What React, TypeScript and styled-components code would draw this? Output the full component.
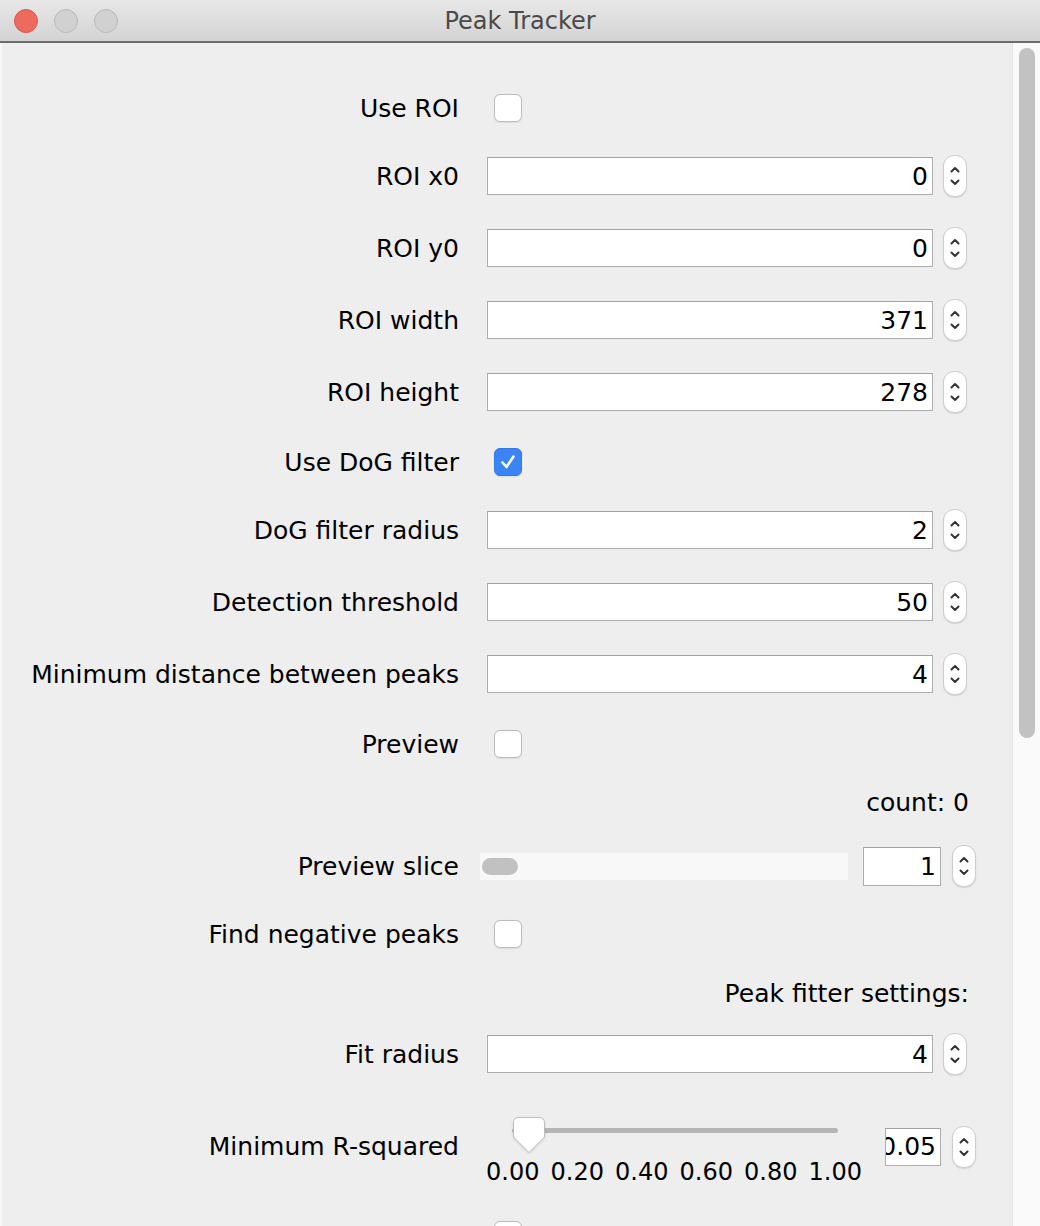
import styled, { createGlobalStyle } from "styled-components";

const GlobalStyle = createGlobalStyle`
  html, body {
    margin: 0;
    padding: 0;
    background: #eeeeee;
  }
  body {
    font-family: "DejaVu Sans", "Liberation Sans", sans-serif;
    color: #000;
  }
`;

const Window = styled.div`
  width: 1040px;
  height: 1226px;
  overflow: hidden;
  display: flex;
  flex-direction: column;
  background: #eeeeee;
`;

const TitleBar = styled.div`
  height: 41px;
  flex: none;
  display: grid;
  grid-template-columns: 1fr auto 1fr;
  align-items: center;
  background: linear-gradient(#e8e8e8, #d3d3d3);
  border-bottom: 2px solid #6c6c6c;
`;

const Lights = styled.div`
  display: flex;
  gap: 16px;
  padding-left: 14px;
`;

const Light = styled.span<{ $red?: boolean }>`
  width: 24px;
  height: 24px;
  box-sizing: border-box;
  border-radius: 50%;
  background: ${(p) => (p.$red ? "#ee6a5f" : "#d1d1d1")};
  border: 1px solid ${(p) => (p.$red ? "#d8584d" : "#b9b9b9")};
`;

const Title = styled.div`
  font-size: 24px;
  color: #4a4a4a;
  padding-top: 1px;
`;

const Body = styled.div`
  flex: 1;
  display: flex;
  min-height: 0;
`;

const Panel = styled.div`
  flex: 1;
  display: flex;
  flex-direction: column;
  padding-top: 43px;
  border-left: 2px solid #f6f6f6;
`;

const ScrollTrack = styled.div`
  width: 28px;
  flex: none;
  background: #fafafa;
  border-left: 1px solid #e4e4e4;
  padding: 5px 0 0 6px;
  box-sizing: border-box;
`;

const ScrollThumb = styled.div`
  width: 16px;
  height: 690px;
  border-radius: 8px;
  background: #c2c2c2;
`;

const Row = styled.div<{ $top: number; $h: number }>`
  display: grid;
  grid-template-columns: 457px 482px;
  column-gap: 28px;
  align-items: center;
  height: ${(p) => p.$h}px;
  margin-top: ${(p) => p.$top}px;
  flex: none;
`;

const Label = styled.div`
  font-size: 25px;
  text-align: right;
  white-space: nowrap;
`;

const Control = styled.div<{ $end?: boolean }>`
  display: flex;
  align-items: center;
  justify-content: ${(p) => (p.$end ? "flex-end" : "flex-start")};
  font-size: 25px;
`;

const Box = styled.span<{ $checked?: boolean }>`
  width: 28px;
  height: 28px;
  box-sizing: border-box;
  margin-left: 7px;
  border-radius: 6px;
  display: flex;
  align-items: center;
  justify-content: center;
  background: ${(p) => (p.$checked ? "#3a84f6" : "#ffffff")};
  border: 1px solid ${(p) => (p.$checked ? "#3479e6" : "#bcbcbc")};
  box-shadow: 0 0.5px 1px rgba(0, 0, 0, 0.08);
`;

const Field = styled.div<{ $w: number; $h?: number; $ml?: number }>`
  width: ${(p) => p.$w}px;
  height: ${(p) => p.$h ?? 38}px;
  margin-left: ${(p) => p.$ml ?? 0}px;
  box-sizing: border-box;
  background: #ffffff;
  border: 1px solid #adadad;
  border-top-color: #a2a2a2;
  display: flex;
  align-items: center;
  justify-content: flex-end;
  padding-right: 4px;
  overflow: hidden;
  white-space: nowrap;
  font-size: 25px;
  flex: none;
`;

const Spinner = styled.div<{ $ml?: number }>`
  width: 24px;
  height: 42px;
  margin-left: ${(p) => p.$ml ?? 10}px;
  box-sizing: border-box;
  border-radius: 11px;
  background: #ffffff;
  border: 1px solid #cdcdcd;
  box-shadow: 0 1px 1px rgba(0, 0, 0, 0.1);
  display: flex;
  flex-direction: column;
  align-items: center;
  justify-content: center;
  gap: 6px;
  flex: none;
`;

const SliceTrack = styled.div`
  width: 368px;
  height: 27px;
  margin-left: -7px;
  background: #f8f8f8;
  display: flex;
  align-items: center;
  padding-left: 2px;
  box-sizing: border-box;
  flex: none;
`;

const SlicePill = styled.div`
  width: 36px;
  height: 17px;
  border-radius: 9px;
  background: #c1c1c1;
`;

const Slider = styled.div`
  width: 376px;
  margin-left: -1px;
  display: flex;
  flex-direction: column;
  flex: none;
`;

const Rail = styled.div`
  position: relative;
  height: 46px;
  padding: 22px 24px 0 26px;
  box-sizing: border-box;
`;

const RailLine = styled.div`
  height: 5px;
  border-radius: 3px;
  background: #b5b5b5;
`;

const Knob = styled.svg`
  position: absolute;
  top: 11px;
  filter: drop-shadow(0 1px 1px rgba(0, 0, 0, 0.12));
`;

const Ticks = styled.div`
  display: flex;
  justify-content: space-between;
  margin-top: 6px;
  font-size: 24px;
  line-height: 29px;
`;

function Stepper({ ml }: { ml?: number }) {
  return (
    <Spinner $ml={ml}>
      <svg width="10" height="7" viewBox="0 0 10 7">
        <path d="M1.5 5.5 L5 2 L8.5 5.5" fill="none" stroke="#333" strokeWidth="2" strokeLinecap="round" strokeLinejoin="round" />
      </svg>
      <svg width="10" height="7" viewBox="0 0 10 7">
        <path d="M1.5 1.5 L5 5 L8.5 1.5" fill="none" stroke="#333" strokeWidth="2" strokeLinecap="round" strokeLinejoin="round" />
      </svg>
    </Spinner>
  );
}

function Check({ checked }: { checked?: boolean }) {
  return (
    <Box $checked={checked}>
      {checked && (
        <svg width="18" height="18" viewBox="0 0 18 18">
          <path d="M3.5 9.5 L7.5 14 L14.5 3.5" fill="none" stroke="#fff" strokeWidth="2.6" strokeLinecap="round" strokeLinejoin="round" />
        </svg>
      )}
    </Box>
  );
}

function NumberRow({ label, value, top }: { label: string; value: string; top: number }) {
  return (
    <Row $top={top} $h={44}>
      <Label>{label}</Label>
      <Control>
        <Field $w={446}>{value}</Field>
        <Stepper />
      </Control>
    </Row>
  );
}

function CheckRow({ label, checked, top }: { label: string; checked?: boolean; top: number }) {
  return (
    <Row $top={top} $h={44}>
      <Label>{label}</Label>
      <Control>
        <Check checked={checked} />
      </Control>
    </Row>
  );
}

const ticks = ["0.00", "0.20", "0.40", "0.60", "0.80", "1.00"];
const rsq = 0.05;

export default function App() {
  return (
    <Window>
      <GlobalStyle />
      <TitleBar>
        <Lights>
          <Light $red />
          <Light />
          <Light />
        </Lights>
        <Title>Peak Tracker</Title>
        <div />
      </TitleBar>
      <Body>
        <Panel>
          <CheckRow label="Use ROI" top={0} />
          <NumberRow label="ROI x0" value="0" top={24} />
          <NumberRow label="ROI y0" value="0" top={28} />
          <NumberRow label="ROI width" value="371" top={28} />
          <NumberRow label="ROI height" value="278" top={28} />
          <CheckRow label="Use DoG filter" checked top={26} />
          <NumberRow label="DoG filter radius" value="2" top={24} />
          <NumberRow label="Detection threshold" value="50" top={28} />
          <NumberRow label="Minimum distance between peaks" value="4" top={28} />
          <CheckRow label="Preview" top={26} />
          <Row $top={14} $h={44}>
            <div />
            <Control $end>count: 0</Control>
          </Row>
          <Row $top={20} $h={44}>
            <Label>Preview slice</Label>
            <Control>
              <SliceTrack>
                <SlicePill />
              </SliceTrack>
              <Field $w={78} $h={39} $ml={15}>
                1
              </Field>
              <Stepper ml={11} />
            </Control>
          </Row>
          <CheckRow label="Find negative peaks" top={24} />
          <Row $top={15} $h={44}>
            <div />
            <Control $end>Peak fitter settings:</Control>
          </Row>
          <NumberRow label="Fit radius" value="4" top={17} />
          <Row $top={30} $h={81}>
            <Label>Minimum R-squared</Label>
            <Control>
              <Slider>
                <Rail>
                  <RailLine />
                  <Knob
                    width="32"
                    height="36"
                    viewBox="0 0 32 36"
                    style={{ left: 26 + rsq * 326 - 15.5 }}
                  >
                    <path
                      d="M6 0.5 H26 Q31.5 0.5 31.5 6 V20 L16 35.5 L0.5 20 V6 Q0.5 0.5 6 0.5 Z"
                      fill="#fff"
                      stroke="#bdbdbd"
                    />
                  </Knob>
                </Rail>
                <Ticks>
                  {ticks.map((t) => (
                    <span key={t}>{t}</span>
                  ))}
                </Ticks>
              </Slider>
              <Field $w={56} $ml={23}>
                0.05
              </Field>
              <Stepper ml={11} />
            </Control>
          </Row>
          <CheckRow label="Integrate" top={26} />
        </Panel>
        <ScrollTrack>
          <ScrollThumb />
        </ScrollTrack>
      </Body>
    </Window>
  );
}
